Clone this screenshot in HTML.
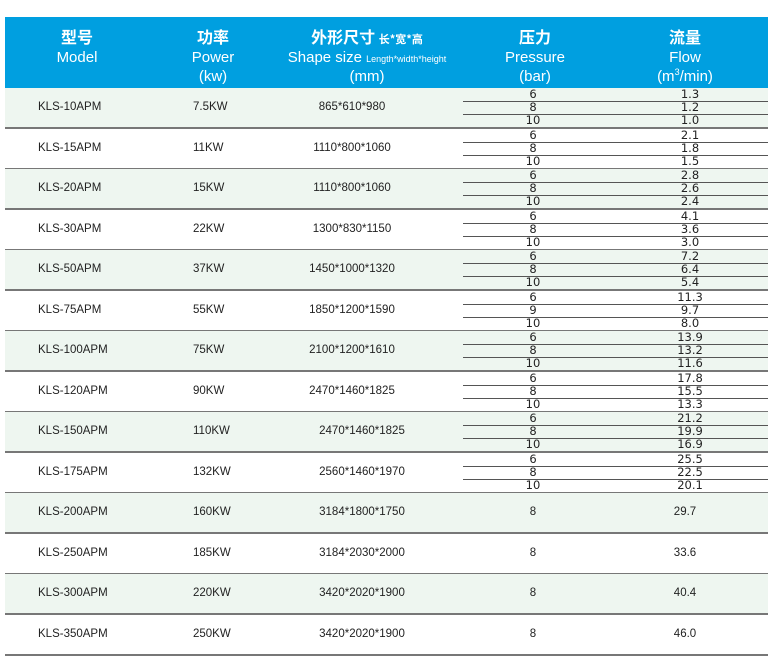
<!DOCTYPE html>
<html><head><meta charset="utf-8"><style>
body{margin:0;width:772px;height:660px;background:#fff;position:relative;font-family:"Liberation Sans","Noto Sans CJK SC",sans-serif;overflow:hidden}
.hdr{position:absolute;left:5px;top:17px;width:763px;height:71px;background:#009fe0;color:#fff}
.hc{position:absolute;text-align:center;width:200px;margin-left:-100px;top:0}
.hc .z{position:absolute;top:9px;width:200px;font-size:16px;font-weight:bold;font-family:"Noto Sans CJK SC",sans-serif;line-height:20px}
.hc .e{position:absolute;top:32px;width:200px;font-size:15px;line-height:18px}
.hc .f{position:absolute;top:51px;width:200px;font-size:15px;line-height:18px}
.row{position:absolute;left:5px;width:763px;height:41px;border-bottom:2px solid #777;box-sizing:border-box}
.g{background:#eef6f0}
.t{position:absolute;top:13px;font-size:11.5px;color:#222;white-space:nowrap}
.a{left:33px}.b{left:188px}.c{left:252px;width:190px;text-align:center}
.p{left:478px;width:100px;text-align:center}.q{left:630px;width:100px;text-align:center}
.sub{position:absolute;left:458px;width:305px;height:13px;font-family:"DejaVu Sans",sans-serif;font-size:11.5px;color:#222;line-height:13px}
.sub span{position:absolute;top:0;width:100px;text-align:center}
.sub span:first-child{left:20px}.sub span:last-child{left:177px}
.s0{top:0;border-bottom:1.5px solid #555}.s1{top:13px;border-bottom:1.5px solid #555}.s2{top:26px}
</style></head><body>
<div class="hdr">
<div class="hc" style="left:72px"><div class="z">型号</div><div class="e">Model</div></div>
<div class="hc" style="left:208px"><div class="z">功率</div><div class="e">Power</div><div class="f">(kw)</div></div>
<div class="hc" style="left:362px"><div class="z">外形尺寸 <span style="font-size:11px">长*宽*高</span></div><div class="e" style="left:-30px;width:260px;white-space:nowrap">Shape size <span style="font-size:9px">Length*width*height</span></div><div class="f">(mm)</div></div>
<div class="hc" style="left:530px"><div class="z">压力</div><div class="e">Pressure</div><div class="f">(bar)</div></div>
<div class="hc" style="left:680px"><div class="z">流量</div><div class="e">Flow</div><div class="f">(m<sup style="font-size:9px;line-height:0">3</sup>/min)</div></div>
</div>

<div class="row g" style="top:88px"><div class="t a">KLS-10APM</div><div class="t b">7.5KW</div><div class="t c">865*610*980</div>
<div class="sub s0"><span>6</span><span>1.3</span></div><div class="sub s1"><span>8</span><span>1.2</span></div><div class="sub s2"><span>10</span><span>1.0</span></div></div>
<div class="row" style="top:128.5px"><div class="t a">KLS-15APM</div><div class="t b">11KW</div><div class="t c">1110*800*1060</div>
<div class="sub s0"><span>6</span><span>2.1</span></div><div class="sub s1"><span>8</span><span>1.8</span></div><div class="sub s2"><span>10</span><span>1.5</span></div></div>
<div class="row g" style="top:169px"><div class="t a">KLS-20APM</div><div class="t b">15KW</div><div class="t c">1110*800*1060</div>
<div class="sub s0"><span>6</span><span>2.8</span></div><div class="sub s1"><span>8</span><span>2.6</span></div><div class="sub s2"><span>10</span><span>2.4</span></div></div>
<div class="row" style="top:209.5px"><div class="t a">KLS-30APM</div><div class="t b">22KW</div><div class="t c">1300*830*1150</div>
<div class="sub s0"><span>6</span><span>4.1</span></div><div class="sub s1"><span>8</span><span>3.6</span></div><div class="sub s2"><span>10</span><span>3.0</span></div></div>
<div class="row g" style="top:250px"><div class="t a">KLS-50APM</div><div class="t b">37KW</div><div class="t c">1450*1000*1320</div>
<div class="sub s0"><span>6</span><span>7.2</span></div><div class="sub s1"><span>8</span><span>6.4</span></div><div class="sub s2"><span>10</span><span>5.4</span></div></div>
<div class="row" style="top:290.5px"><div class="t a">KLS-75APM</div><div class="t b">55KW</div><div class="t c">1850*1200*1590</div>
<div class="sub s0"><span>6</span><span>11.3</span></div><div class="sub s1"><span>9</span><span>9.7</span></div><div class="sub s2"><span>10</span><span>8.0</span></div></div>
<div class="row g" style="top:331px"><div class="t a">KLS-100APM</div><div class="t b">75KW</div><div class="t c">2100*1200*1610</div>
<div class="sub s0"><span>6</span><span>13.9</span></div><div class="sub s1"><span>8</span><span>13.2</span></div><div class="sub s2"><span>10</span><span>11.6</span></div></div>
<div class="row" style="top:371.5px"><div class="t a">KLS-120APM</div><div class="t b">90KW</div><div class="t c">2470*1460*1825</div>
<div class="sub s0"><span>6</span><span>17.8</span></div><div class="sub s1"><span>8</span><span>15.5</span></div><div class="sub s2"><span>10</span><span>13.3</span></div></div>
<div class="row g" style="top:412px"><div class="t a">KLS-150APM</div><div class="t b">110KW</div><div class="t c" style="left:262px">2470*1460*1825</div>
<div class="sub s0"><span>6</span><span>21.2</span></div><div class="sub s1"><span>8</span><span>19.9</span></div><div class="sub s2"><span>10</span><span>16.9</span></div></div>
<div class="row" style="top:452.5px"><div class="t a">KLS-175APM</div><div class="t b">132KW</div><div class="t c" style="left:262px">2560*1460*1970</div>
<div class="sub s0"><span>6</span><span>25.5</span></div><div class="sub s1"><span>8</span><span>22.5</span></div><div class="sub s2"><span>10</span><span>20.1</span></div></div>
<div class="row g" style="top:493px"><div class="t a">KLS-200APM</div><div class="t b">160KW</div><div class="t c" style="left:262px">3184*1800*1750</div><div class="t p">8</div><div class="t q">29.7</div></div>
<div class="row" style="top:533.5px"><div class="t a">KLS-250APM</div><div class="t b">185KW</div><div class="t c" style="left:262px">3184*2030*2000</div><div class="t p">8</div><div class="t q">33.6</div></div>
<div class="row g" style="top:574px"><div class="t a">KLS-300APM</div><div class="t b">220KW</div><div class="t c" style="left:262px">3420*2020*1900</div><div class="t p">8</div><div class="t q">40.4</div></div>
<div class="row" style="top:614.5px"><div class="t a">KLS-350APM</div><div class="t b">250KW</div><div class="t c" style="left:262px">3420*2020*1900</div><div class="t p">8</div><div class="t q">46.0</div></div>
</body></html>
